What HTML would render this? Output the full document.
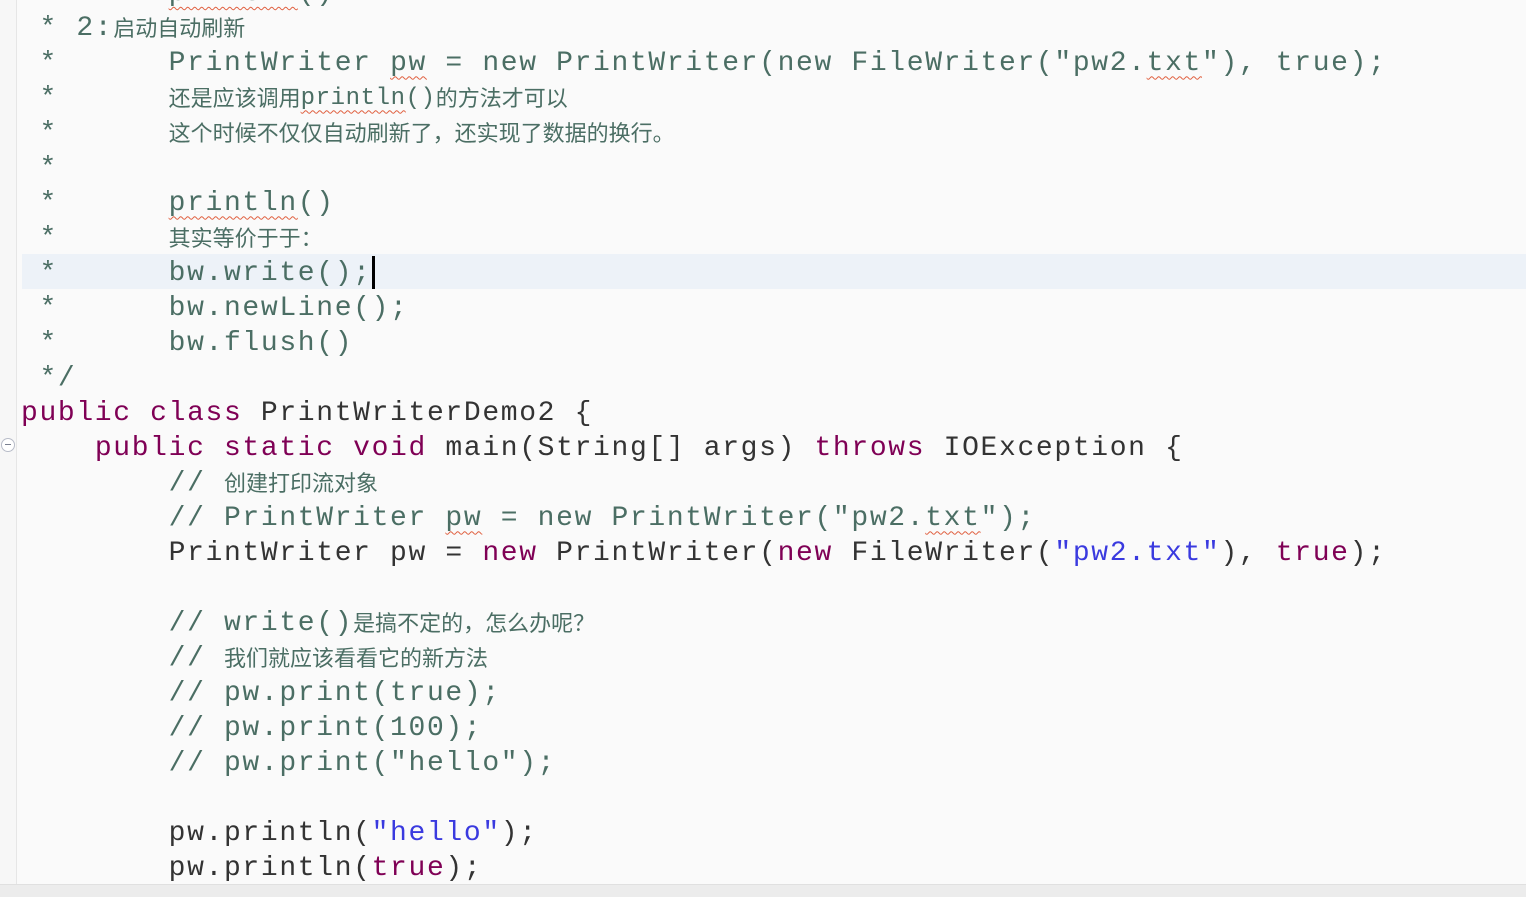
<!DOCTYPE html>
<html><head><meta charset="utf-8">
<style>
html,body{margin:0;padding:0;}
body{width:1526px;height:896px;overflow:hidden;background:#fafafa;position:relative;font-family:"Liberation Mono","Courier New",monospace;}
.gut{position:absolute;left:0;top:0;width:16px;height:884px;background:#f7f7f7;border-right:1px solid #e6e6e6;}
.hl{position:absolute;left:22px;right:0;top:254px;height:35px;background:#edf2f8;}
.l{position:absolute;left:21px;height:35px;line-height:35px;font-size:28px;letter-spacing:1.65px;white-space:pre;color:#333;}
.c{color:#4b6e64;}
.k{color:#7f0055;}
.s{color:#3a3adf;}
.z{font-family:"Liberation Sans","Noto Sans CJK SC",sans-serif;font-size:22px;letter-spacing:0;vertical-align:top;}
.sm{font-size:24px;letter-spacing:0.6px;vertical-align:top;}
.w{text-decoration:underline wavy #e06040;text-decoration-thickness:1px;text-underline-offset:6px;}
.cur{display:inline-block;width:3px;height:33px;background:#000;vertical-align:top;margin-top:0px;}
.bot{position:absolute;left:0;top:884px;width:1526px;height:12px;background:#ececec;border-top:1px solid #e0e0e0;}
.fold{position:absolute;left:1px;top:438px;width:12px;height:12px;border:1px solid #b8bcc8;border-radius:50%;background:#fff;}
.fold:after{content:"";position:absolute;left:3px;top:5px;width:6px;height:1px;background:#7a8090;}
</style></head><body>
<div class="gut"></div>
<div class="hl"></div>
<div class="fold"></div>
<div class="l c" style="top:-24px"> *      <span class="w">println</span>()</div>
<div class="l c" style="top:10.5px"> * 2:<span class="z">启动自动刷新</span></div>
<div class="l c" style="top:45.5px"> *      PrintWriter <span class="w">pw</span> = new PrintWriter(new FileWriter("pw2.<span class="w">txt</span>"), true);</div>
<div class="l c" style="top:80.5px"> *      <span class="z">还是应该调用</span><span class="sm"><span class="w">println</span>()</span><span class="z">的方法才可以</span></div>
<div class="l c" style="top:115.5px"> *      <span class="z">这个时候不仅仅自动刷新了，还实现了数据的换行。</span></div>
<div class="l c" style="top:150.5px"> *</div>
<div class="l c" style="top:185.5px"> *      <span class="w">println</span>()</div>
<div class="l c" style="top:220.5px"> *      <span class="z">其实等价于于：</span></div>
<div class="l c" style="top:255.5px"> *      bw.write();<span class="cur"></span></div>
<div class="l c" style="top:290.5px"> *      bw.newLine();</div>
<div class="l c" style="top:325.5px"> *      bw.flush()</div>
<div class="l c" style="top:360.5px"> */</div>
<div class="l" style="top:395.5px"><span class="k">public</span> <span class="k">class</span> PrintWriterDemo2 {</div>
<div class="l" style="top:430.5px">    <span class="k">public</span> <span class="k">static</span> <span class="k">void</span> main(String[] args) <span class="k">throws</span> IOException {</div>
<div class="l c" style="top:465.5px">        // <span class="z">创建打印流对象</span></div>
<div class="l c" style="top:500.5px">        // PrintWriter <span class="w">pw</span> = new PrintWriter("pw2.<span class="w">txt</span>");</div>
<div class="l" style="top:535.5px">        PrintWriter pw = <span class="k">new</span> PrintWriter(<span class="k">new</span> FileWriter(<span class="s">"pw2.txt"</span>), <span class="k">true</span>);</div>
<div class="l c" style="top:605.5px">        // write()<span class="z">是搞不定的，怎么办呢？</span></div>
<div class="l c" style="top:640.5px">        // <span class="z">我们就应该看看它的新方法</span></div>
<div class="l c" style="top:675.5px">        // pw.print(true);</div>
<div class="l c" style="top:710.5px">        // pw.print(100);</div>
<div class="l c" style="top:745.5px">        // pw.print("hello");</div>
<div class="l" style="top:815.5px">        pw.println(<span class="s">"hello"</span>);</div>
<div class="l" style="top:850.5px">        pw.println(<span class="k">true</span>);</div>
<div class="bot"></div>
</body></html>
